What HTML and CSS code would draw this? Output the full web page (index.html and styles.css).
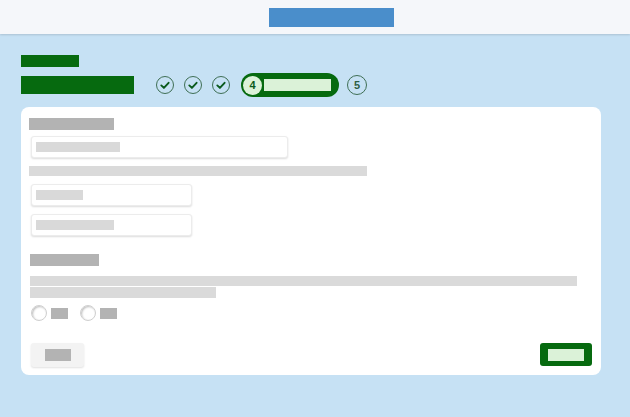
FILE: index.html
```html
<!DOCTYPE html>
<html>
<head>
<meta charset="utf-8">
<link rel="stylesheet" href="styles.css">
</head>
<body>
<header class="topbar">
  <div class="brand"></div>
</header>
<main class="page">
  <div class="eyebrow"></div>
  <div class="title-row">
    <div class="title"></div>
    <div class="stepper">
      <span class="step done"><svg viewBox="0 0 18 18" width="18" height="18"><path d="M5.3 9.4 L7.9 11.9 L12.6 6.8" fill="none" stroke="#0b5a1c" stroke-width="1.9" stroke-linecap="round" stroke-linejoin="round"/></svg></span>
      <span class="step done"><svg viewBox="0 0 18 18" width="18" height="18"><path d="M5.3 9.4 L7.9 11.9 L12.6 6.8" fill="none" stroke="#0b5a1c" stroke-width="1.9" stroke-linecap="round" stroke-linejoin="round"/></svg></span>
      <span class="step done"><svg viewBox="0 0 18 18" width="18" height="18"><path d="M5.3 9.4 L7.9 11.9 L12.6 6.8" fill="none" stroke="#0b5a1c" stroke-width="1.9" stroke-linecap="round" stroke-linejoin="round"/></svg></span>
      <span class="step-current">
        <span class="step-num">4</span>
        <span class="step-label"></span>
      </span>
      <span class="step todo">5</span>
    </div>
  </div>
  <section class="card">
    <div class="label w85"></div>
    <div class="input w257"><span class="ph w84"></span></div>
    <div class="hint w338"></div>
    <div class="input w161"><span class="ph w47"></span></div>
    <div class="input w161 short"><span class="ph w78"></span></div>
    <div class="label w69 section"></div>
    <div class="hint w547 first"></div>
    <div class="hint w186 second"></div>
    <div class="radios">
      <span class="radio"></span><span class="rlabel"></span>
      <span class="radio"></span><span class="rlabel"></span>
    </div>
    <div class="actions">
      <button class="btn back"><span class="btn-text"></span></button>
      <button class="btn next"><span class="btn-text"></span></button>
    </div>
  </section>
</main>
</body>
</html>
```
FILE: styles.css
```css
* { box-sizing: border-box; }
html, body { margin: 0; padding: 0; }
body {
  background: #c6e1f4;
  font-family: "Liberation Sans", Arial, sans-serif;
  width: 630px;
  height: 417px;
  overflow: hidden;
}
.topbar {
  height: 34px;
  background: #f5f7fa;
  box-shadow: 0 1px 2px rgba(0,0,0,0.14);
  display: flex;
  justify-content: center;
  padding: 8px 0 0 32px;
}
.brand {
  width: 125px;
  height: 19px;
  background: #4a8ecb;
}
.page {
  padding: 21px 29px 0 21px;
}
.eyebrow {
  width: 58px;
  height: 12px;
  background: #066a0f;
  margin-bottom: 6px;
}
.title-row {
  display: flex;
  align-items: center;
  height: 24px;
}
.title {
  width: 113px;
  height: 18px;
  background: #066a0f;
  margin-right: 22px;
}
.stepper {
  display: flex;
  align-items: center;
  gap: 10px;
}
.step {
  width: 18px;
  height: 18px;
  border-radius: 50%;
  border: 1px solid #3f6f55;
  display: flex;
  align-items: center;
  justify-content: center;
}
.step svg { display: block; margin: -1px; }
.step-current {
  width: 98px;
  height: 24px;
  border-radius: 12px;
  background: #066a0f;
  display: flex;
  align-items: center;
  padding-left: 2px;
  margin-left: 1px;
}
.step-num {
  width: 19px;
  height: 19px;
  border-radius: 50%;
  background: #dbf2d8;
  color: #0b5a1c;
  font-size: 11px;
  font-weight: bold;
  display: flex;
  align-items: center;
  justify-content: center;
}
.step-label {
  width: 67px;
  height: 12px;
  background: #dbf2d8;
  margin-left: 2px;
}
.step.todo {
  width: 20px;
  height: 20px;
  margin-left: -2px;
  color: #2f5f45;
  font-size: 11px;
  font-weight: bold;
}
.card {
  margin-top: 10px;
  background: #ffffff;
  border-radius: 8px;
  height: 268px;
  padding: 11px 9px 8px 8px;
  display: flex;
  flex-direction: column;
  align-items: flex-start;
}
.label {
  height: 12px;
  background: #b3b3b3;
}
.w85 { width: 85px; }
.w69 { width: 69px; }
.label.section { margin-top: 18px; margin-left: 1px; }
.input {
  margin-top: 6px;
  margin-left: 2px;
  height: 22px;
  background: #fff;
  border: 1px solid #ececec;
  border-radius: 3px;
  box-shadow: 0 1px 2px rgba(0,0,0,0.14);
  display: flex;
  align-items: center;
  padding-left: 4px;
}
.input + .hint { margin-top: 8px; }
.hint + .input { margin-top: 8px; }
.input + .input { margin-top: 8px; }
.w257 { width: 257px; }
.w161 { width: 161px; }
.ph {
  height: 10px;
  background: #d9d9d9;
}
.w84 { width: 84px; }
.w47 { width: 47px; }
.w78 { width: 78px; }
.hint {
  height: 10px;
  background: #dadada;
}
.w338 { width: 338px; }
.w547 { width: 547px; margin-left: 1px; }
.w186 { width: 186px; margin-left: 1px; }
.hint.first { margin-top: 10px; }
.hint.second { margin-top: 1px; height: 11px; }
.radios {
  margin-top: 7px;
  margin-left: 2px;
  display: flex;
  align-items: center;
  height: 16px;
}
.radio {
  width: 16px;
  height: 16px;
  border-radius: 50%;
  background: #fff;
  border: 1px solid #cfcfcf;
  box-shadow: inset 1px 1px 2px rgba(0,0,0,0.25);
  margin-right: 4px;
}
.rlabel {
  width: 17px;
  height: 11px;
  background: #b3b3b3;
  margin-right: 12px;
}
.actions {
  margin-top: auto;
  width: 100%;
  display: flex;
  justify-content: space-between;
  align-items: flex-start;
}
.btn {
  border: none;
  padding: 0;
  margin: 0;
  border-radius: 3px;
  display: flex;
  align-items: center;
  justify-content: center;
  font: inherit;
}
.back {
  width: 53px;
  height: 24px;
  margin-left: 2px;
  background: #f3f3f3;
  box-shadow: 0 1px 2px rgba(0,0,0,0.12);
}
.back .btn-text {
  width: 26px;
  height: 12px;
  background: #b3b3b3;
  margin-left: 1px;
}
.next {
  width: 52px;
  height: 23px;
  background: #066a0f;
}
.next .btn-text {
  width: 36px;
  height: 12px;
  background: #dbf2d8;
}
```
